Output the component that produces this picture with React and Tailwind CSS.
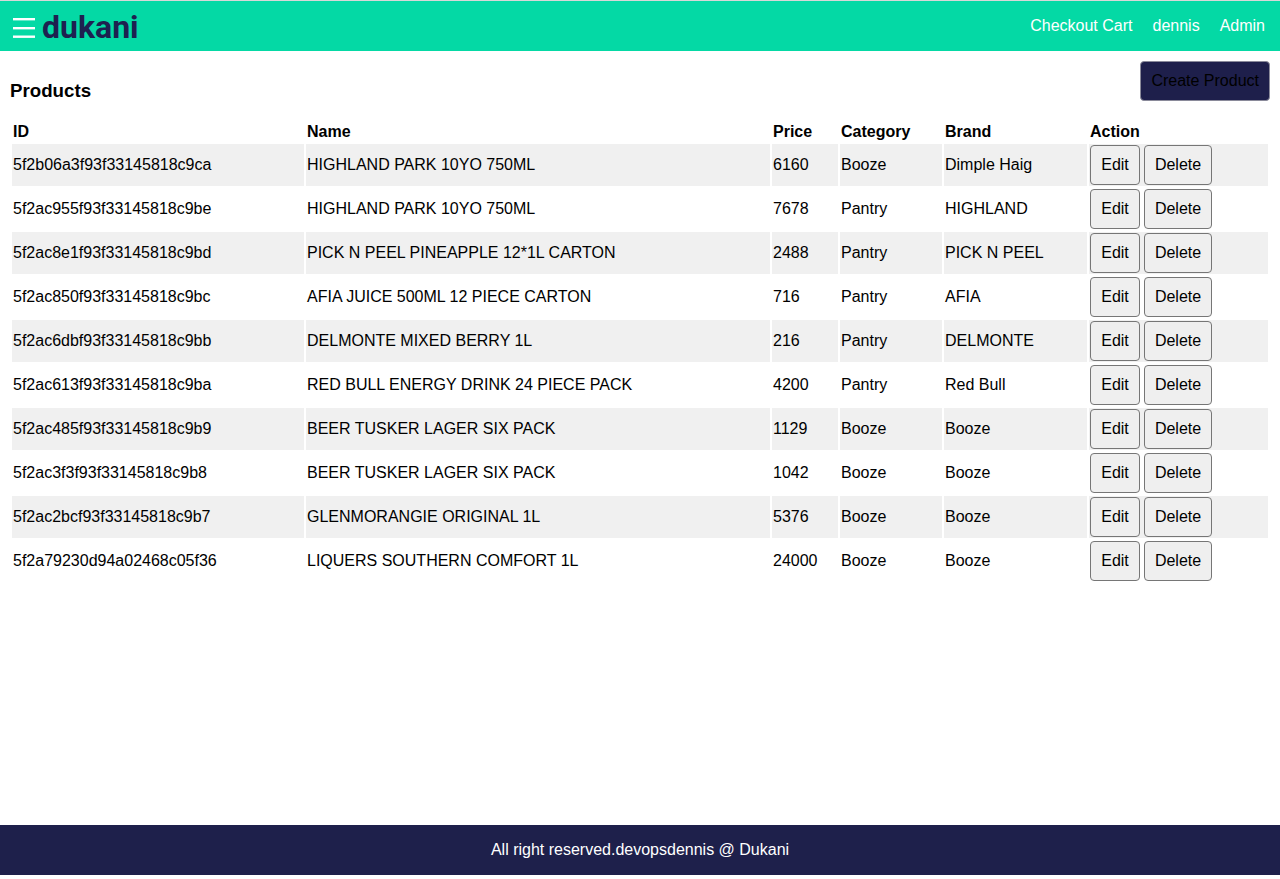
import React from "react";

const rows = [
  ["5f2b06a3f93f33145818c9ca", "HIGHLAND PARK 10YO 750ML", "6160", "Booze", "Dimple Haig"],
  ["5f2ac955f93f33145818c9be", "HIGHLAND PARK 10YO 750ML", "7678", "Pantry", "HIGHLAND"],
  ["5f2ac8e1f93f33145818c9bd", "PICK N PEEL PINEAPPLE 12*1L CARTON", "2488", "Pantry", "PICK N PEEL"],
  ["5f2ac850f93f33145818c9bc", "AFIA JUICE 500ML 12 PIECE CARTON", "716", "Pantry", "AFIA"],
  ["5f2ac6dbf93f33145818c9bb", "DELMONTE MIXED BERRY 1L", "216", "Pantry", "DELMONTE"],
  ["5f2ac613f93f33145818c9ba", "RED BULL ENERGY DRINK 24 PIECE PACK", "4200", "Pantry", "Red Bull"],
  ["5f2ac485f93f33145818c9b9", "BEER TUSKER LAGER SIX PACK", "1129", "Booze", "Booze"],
  ["5f2ac3f3f93f33145818c9b8", "BEER TUSKER LAGER SIX PACK", "1042", "Booze", "Booze"],
  ["5f2ac2bcf93f33145818c9b7", "GLENMORANGIE ORIGINAL 1L", "5376", "Booze", "Booze"],
  ["5f2a79230d94a02468c05f36", "LIQUERS SOUTHERN COMFORT 1L", "24000", "Booze", "Booze"],
];

export default function App() {
  return (
    <div
      className="min-h-[879px] flex flex-col bg-white text-black"
      style={{ fontFamily: '"Liberation Sans", Arial, sans-serif' }}
    >
      <div className="border-t border-[#d8d8d8]" />
      <header className="h-[50px] bg-[#04d9a5] flex items-center justify-between pl-[12px] pr-[15px]">
        <div className="flex items-center">
          <svg width="24" height="24" viewBox="0 0 24 24" className="mr-[6px]">
            <rect x="1" y="4" width="22" height="2.4" fill="white" />
            <rect x="1" y="13" width="22" height="2.4" fill="white" />
            <rect x="1" y="21.5" width="22" height="2.4" fill="white" />
          </svg>
          <span
            className="text-[32px] font-bold text-[#1e2150] leading-none mt-[2px]"
            style={{ fontFamily: "Roboto, Inter, sans-serif" }}
          >
            dukani
          </span>
        </div>
        <nav className="flex items-center gap-[20px] text-white text-[16px]">
          <span>Checkout Cart</span>
          <span>dennis</span>
          <span>Admin</span>
        </nav>
      </header>

      <main className="flex-1 px-[10px]">
        <div className="flex justify-between items-start pt-[10px]">
          <h2 className="text-[18.72px] font-bold leading-[22px] mt-[19px]">Products</h2>
          <button className="h-[40px] px-[10px] bg-[#1e1f4b] text-black text-[16px] rounded-[4px] border border-[#8a8a9a]">
            Create Product
          </button>
        </div>
        <table className="mt-[18px] w-[1260px] table-fixed border-separate border-spacing-[2px] text-[16px] leading-[18px]">
          <colgroup>
            <col className="w-[292px]" />
            <col className="w-[464px]" />
            <col className="w-[66px]" />
            <col className="w-[102px]" />
            <col className="w-[143px]" />
            <col className="w-[179px]" />
          </colgroup>
          <thead>
            <tr className="font-bold text-left">
              <th className="p-[1px] font-bold">ID</th>
              <th className="p-[1px] font-bold">Name</th>
              <th className="p-[1px] font-bold">Price</th>
              <th className="p-[1px] font-bold">Category</th>
              <th className="p-[1px] font-bold">Brand</th>
              <th className="p-[1px] font-bold">Action</th>
            </tr>
          </thead>
          <tbody>
            {rows.map((r, i) => (
              <tr key={r[0]} className={i % 2 === 0 ? "bg-[#f0f0f0]" : "bg-white"}>
                {r.map((c, j) => (
                  <td key={j} className="p-[1px] h-[42px] whitespace-nowrap">
                    {c}
                  </td>
                ))}
                <td className="p-[1px] h-[42px]">
                  <div className="flex gap-[4px]">
                    <button className="h-[40px] w-[50px] bg-[#efefef] border border-[#767676] rounded-[4px] text-[16px]">
                      Edit
                    </button>
                    <button className="h-[40px] w-[68px] bg-[#efefef] border border-[#767676] rounded-[4px] text-[16px]">
                      Delete
                    </button>
                  </div>
                </td>
              </tr>
            ))}
          </tbody>
        </table>
      </main>

      <footer className="h-[50px] bg-[#1e204b] flex items-center justify-center text-white text-[16px] mb-[4px]">
        All right reserved.devopsdennis @ Dukani
      </footer>
    </div>
  );
}
